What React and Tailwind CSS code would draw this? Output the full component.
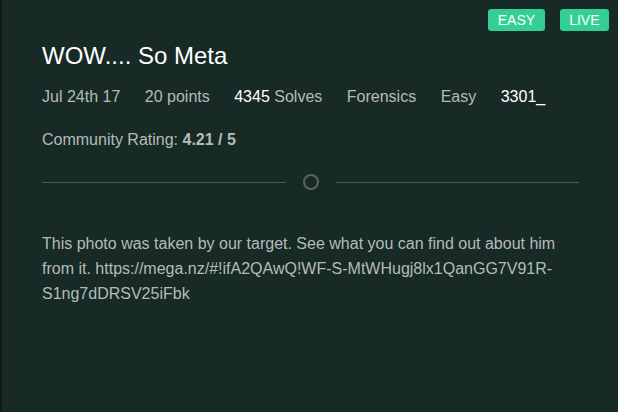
export default function App() {
  return (
    <div
      className="min-h-[412px] w-[618px] bg-[#172a25] border-l-2 border-[#101714] relative text-[#b4bcb8]"
      style={{ fontFamily: '"Liberation Sans", Arial, sans-serif' }}
    >
      {/* badges */}
      <div className="absolute right-[9px] top-[9px] flex gap-[15px]">
        <span className="bg-[#34cf94] text-white text-[14px] leading-[22px] px-[9.5px] rounded-[3px]">EASY</span>
        <span className="bg-[#34cf94] text-white text-[14px] leading-[22px] px-[9.5px] rounded-[3px]">LIVE</span>
      </div>

      <div className="pl-[40px] pr-[39px] pt-[41px]">
        <h1 className="text-[24px] leading-[30px] text-white">WOW.... So Meta</h1>

        <div className="flex gap-[24.5px] mt-[16px] text-[16px] leading-[20px]">
          <span>Jul 24th 17</span>
          <span>20 points</span>
          <span>
            <span className="text-white">4345</span> Solves
          </span>
          <span>Forensics</span>
          <span>Easy</span>
          <span className="text-white">3301_</span>
        </div>

        <p className="mt-[23px] text-[16px] leading-[20px]">
          Community Rating: <b>4.21 / 5</b>
        </p>

        {/* divider */}
        <div className="flex items-center mt-[23px] h-[18px]">
          <div className="flex-1 h-px bg-[#4a5b55]" />
          <div className="mx-[17px] w-[16px] h-[16px] rounded-full border-2 border-[#56665f]" />
          <div className="flex-1 h-px bg-[#4a5b55]" />
        </div>

        <p className="mt-[40px] text-[16px] leading-[25px]">
          This photo was taken by our target. See what you can find out about him from it.
          https://mega.nz/#!ifA2QAwQ!WF-S-MtWHugj8lx1QanGG7V91R-S1ng7dDRSV25iFbk
        </p>
      </div>
    </div>
  );
}
